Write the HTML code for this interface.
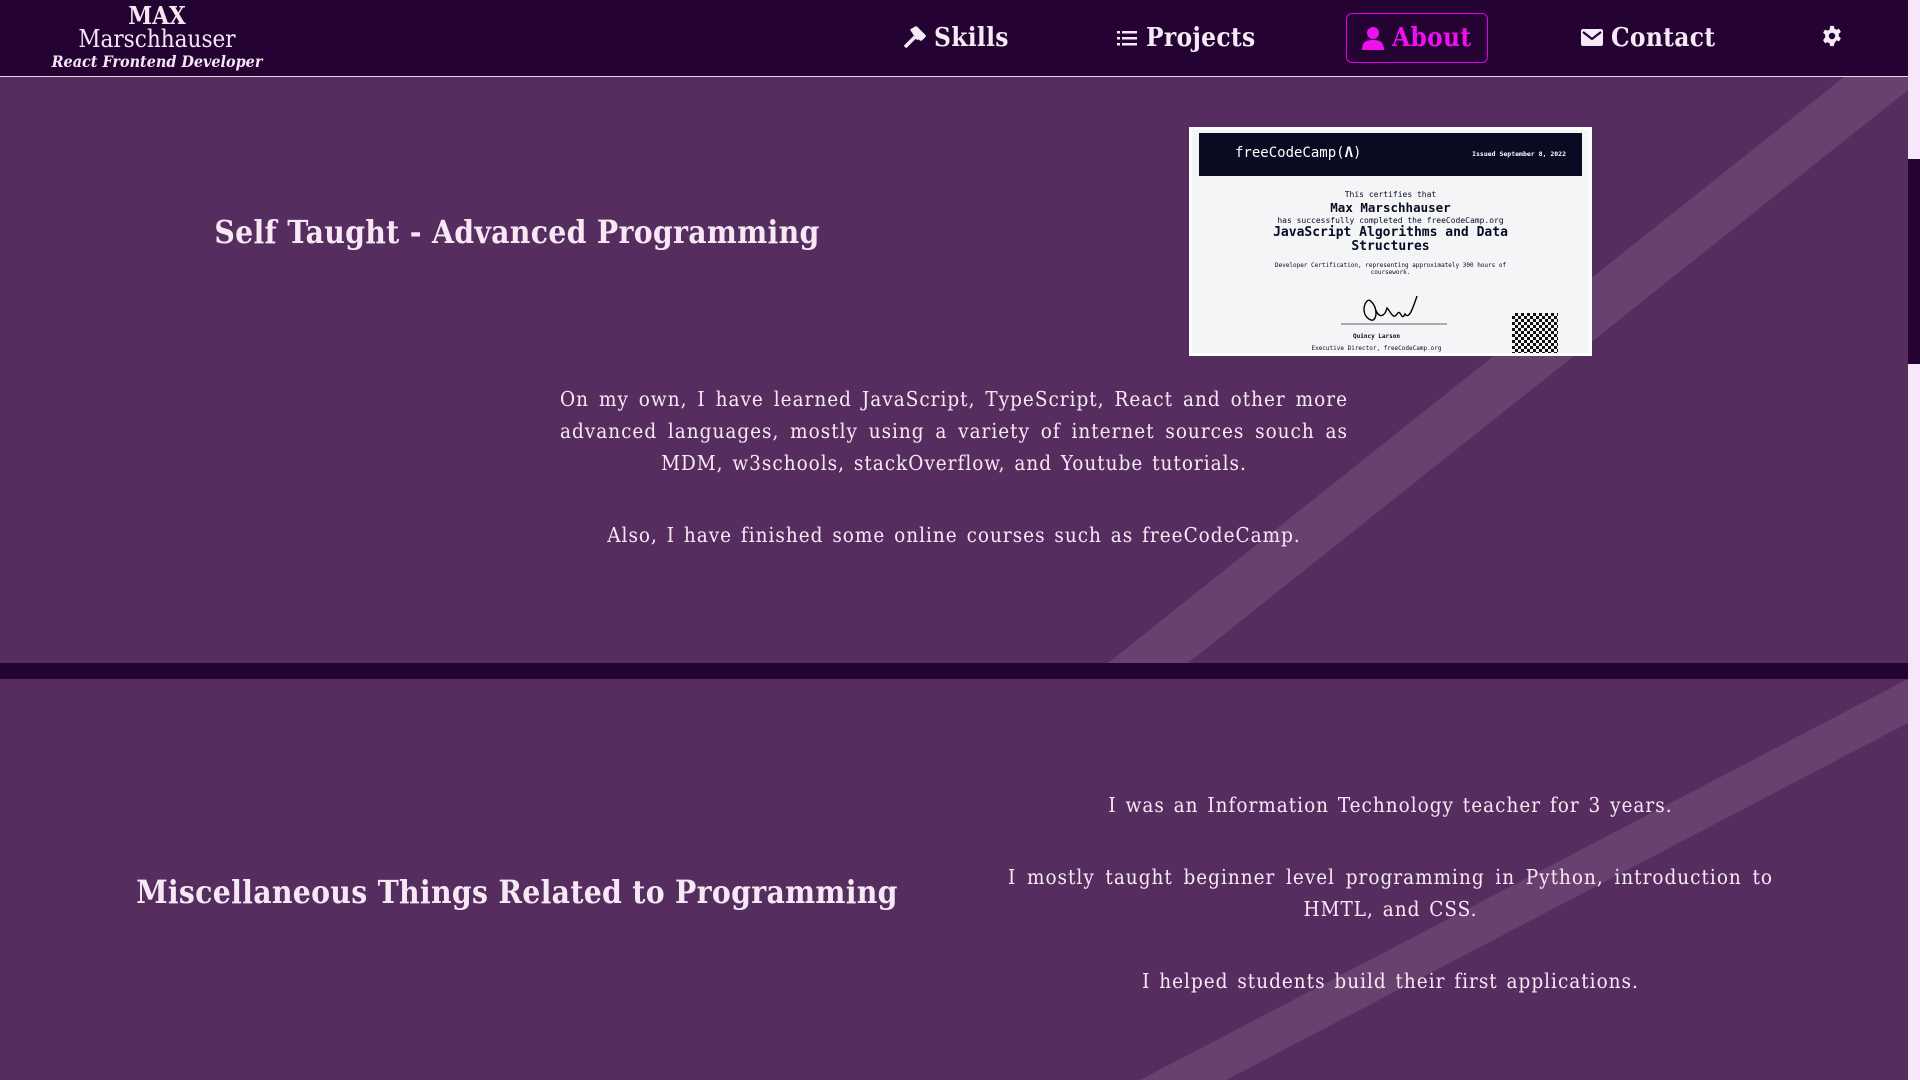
<!DOCTYPE html>
<html><head><meta charset="utf-8"><style>
*{margin:0;padding:0;box-sizing:border-box}
body{width:1920px;height:1080px;overflow:hidden;background:#552e5f;font-family:"DejaVu Serif Condensed","DejaVu Serif","Liberation Serif",serif;font-stretch:condensed;color:#f8e8f6;position:relative}
#hdr{position:absolute;left:0;top:0;width:1908px;height:77px;background:#240232;border-bottom:1px solid #e8d8ea}
.name{position:absolute;left:0;width:314px;text-align:center;line-height:1}
.nav{position:absolute;top:23px;font-size:26px;font-weight:bold;color:#f6eaf6;display:flex;align-items:center;gap:8px;letter-spacing:0.3px}
.sec{position:absolute;left:0;width:1908px;background:#552e5f;overflow:hidden}
.sec svg{position:absolute;left:0;top:0}
h2{position:absolute;font-size:31.5px;font-weight:bold;text-align:center;letter-spacing:0.3px}
p{font-size:20.5px;line-height:32px;letter-spacing:1px;word-spacing:2px}
</style></head><body>
<div id="hdr">
  <div class="name" style="top:4px;font-size:24px;font-weight:bold">MAX</div>
  <div class="name" style="top:27px;font-size:24px">Marschhauser</div>
  <div class="name" style="top:54px;font-size:16px;font-style:italic;font-weight:bold">React Frontend Developer</div>
  <div class="nav" style="left:902px"><svg width="24" height="24" viewBox="0 0 24 24"><path d="M3 21l10-10M9 5l5-3 8 8-3 3-3-2-2 2" stroke="#f6eaf6" stroke-width="3.5" fill="#f6eaf6" stroke-linejoin="round"/></svg>Skills</div>
  <div class="nav" style="left:1116px"><svg width="22" height="22" viewBox="0 0 22 22" fill="#f6eaf6"><rect x="1" y="4" width="3" height="2.5"/><rect x="6" y="4" width="15" height="2.5"/><rect x="1" y="10" width="3" height="2.5"/><rect x="6" y="10" width="15" height="2.5"/><rect x="1" y="16" width="3" height="2.5"/><rect x="6" y="16" width="15" height="2.5"/></svg>Projects</div>
  <div style="position:absolute;left:1346px;top:13px;width:142px;height:50px;border:1.5px solid #e400e4;border-radius:6px"></div>
  <div class="nav" style="left:1362px;color:#ee10ee"><svg width="22" height="24" viewBox="0 0 22 24" fill="#ee10ee"><circle cx="11" cy="7" r="6"/><path d="M0 24c0-8 4-10 11-10s11 2 11 10z"/></svg>About</div>
  <div class="nav" style="left:1581px"><svg width="22" height="20" viewBox="0 0 22 20"><rect x="0" y="1" width="22" height="17" rx="2" fill="#f6eaf6"/><path d="M2 4l9 7 9-7" stroke="#240232" stroke-width="2.2" fill="none"/></svg>Contact</div>
  <div class="nav" style="left:1821px;top:25px"><svg width="22" height="22" viewBox="0 0 24 24" fill="#f6eaf6"><path d="M10 1h4l.6 3 2.2 1.2 2.9-1.1 2 3.4-2.3 2.1v2.8l2.3 2.1-2 3.4-2.9-1.1L14.6 20l-.6 3h-4l-.6-3-2.2-1.2-2.9 1.1-2-3.4L4.6 13.4v-2.8L2.3 8.5l2-3.4 2.9 1.1L9.4 5z"/><circle cx="12" cy="12" r="3.5" fill="#240232"/></svg></div>
</div>

<div class="sec" style="top:77px;height:586px">
  <svg width="1908" height="586"><polygon points="1844,0 1908,0 1908,13 1188,586 1108,586" fill="#69416f"/></svg>
  <h2 style="left:0;width:1034px;top:137px">Self Taught - Advanced Programming</h2>
  <div style="position:absolute;left:1189px;top:50px;width:403px;height:229px;background:#fff;padding:3px">
    <div style="width:100%;height:100%;background:#f4f5f7;position:relative;overflow:hidden;font-family:'DejaVu Sans Mono','Liberation Mono',monospace;font-stretch:normal;color:#0a0a23;text-align:center">
      <div style="margin:0 7px;height:43px;margin-top:3px;background:#0a0a23;color:#fff;position:relative">
        <span style="position:absolute;left:36px;top:12px;font-size:14px">freeCodeCamp(<b>&#923;</b>)</span>
        <span style="position:absolute;right:16px;top:17px;font-size:6.5px;font-weight:bold">Issued September 8, 2022</span>
      </div>
      <div style="font-size:8px;margin-top:14px">This certifies that</div>
      <div style="font-size:12.5px;font-weight:bold;margin-top:1px">Max Marschhauser</div>
      <div style="font-size:8px;margin-top:1px">has successfully completed the freeCodeCamp.org</div>
      <div style="font-size:13px;font-weight:bold;line-height:14px;margin-top:1px">JavaScript Algorithms and Data<br>Structures</div>
      <div style="font-size:6px;line-height:7px;margin-top:8px">Developer Certification, representing approximately 300 hours of<br>coursework.</div>
      <svg style="position:absolute;left:147px;top:160px" width="110" height="40"><path d="M2 34h106" stroke="#333" stroke-width="0.8"/><path d="M30 10c-6 2-8 16 2 20 6 2 8-14-2-20M36 18c4 12 10 8 12 0 4 4 6 12 10 6 4-6 4 8 8 0 4 6 8-6 12-18" stroke="#000" stroke-width="1.4" fill="none"/></svg>
      <div style="position:absolute;left:0;width:100%;top:203px;font-size:6px;font-weight:bold;padding-right:28px">Quincy Larson</div>
      <div style="position:absolute;left:0;width:100%;top:215px;font-size:6px;padding-right:28px">Executive Director, freeCodeCamp.org</div>
      <div style="position:absolute;left:320px;top:183px;width:46px;height:40px;background:repeating-conic-gradient(#111 0 25%,#f4f5f7 0 50%) 0 0/6px 6px"></div>
    </div>
  </div>
  <p style="position:absolute;left:560px;top:306px;width:788px;text-align:justify;text-align-last:center">On my own, I have learned JavaScript, TypeScript, React and other more advanced languages, mostly using a variety of internet sources souch as MDM, w3schools, stackOverflow, and Youtube tutorials.</p>
  <p style="position:absolute;left:560px;top:442px;width:788px;text-align:center">Also, I have finished some online courses such as freeCodeCamp.</p>
</div>
<div style="position:absolute;left:0;top:663px;width:1908px;height:16px;background:#240232"></div>
<div class="sec" style="top:679px;height:401px">
  <svg width="1908" height="401"><polygon points="1908,0 1908,44 1226,401 1140,401" fill="#69416f"/></svg>
  <h2 style="left:0;width:1034px;top:195px">Miscellaneous Things Related to Programming</h2>
  <p style="position:absolute;left:1008px;top:110px;width:765px;text-align:center">I was an Information Technology teacher for 3 years.</p>
  <p style="position:absolute;left:1008px;top:182px;width:765px;text-align:justify;text-align-last:center">I mostly taught beginner level programming in Python, introduction to HMTL, and CSS.</p>
  <p style="position:absolute;left:1008px;top:286px;width:765px;text-align:center">I helped students build their first applications.</p>
</div>
<div style="position:absolute;left:1908px;top:0;width:12px;height:1080px;background:#f8e6fb"></div>
<div style="position:absolute;left:1908px;top:159px;width:12px;height:205px;background:#240232"></div>
</body></html>
